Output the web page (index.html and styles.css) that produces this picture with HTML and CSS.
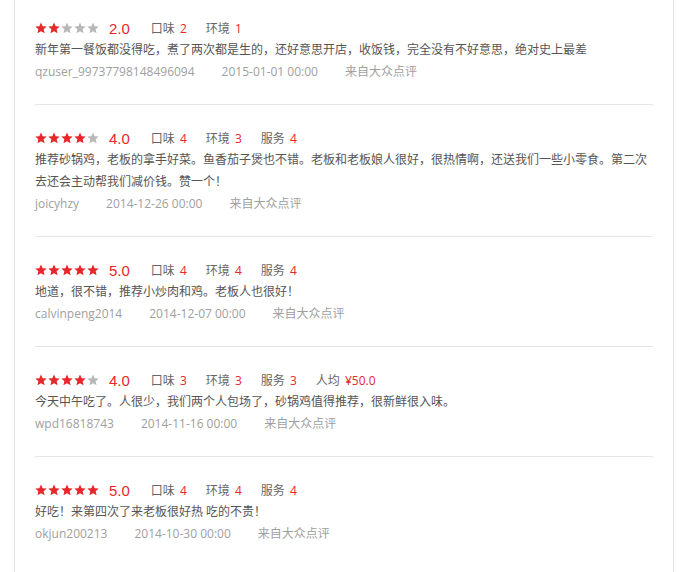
FILE: index.html
```html
<!DOCTYPE html>
<html lang="zh-CN">
<head>
  <meta charset="UTF-8" />
  <title>点评</title>
  <link rel="stylesheet" href="styles.css">
</head>
<body>
  <svg class="defs" width="0" height="0">
    <symbol id="star" viewBox="0 0 12 12">
      <polygon points="6,0.4 7.65,4.2 11.7,4.55 8.65,7.25 9.55,11.3 6,9.15 2.45,11.3 3.35,7.25 0.3,4.55 4.35,4.2" />
    </symbol>
  </svg>

  <div class="reviews">
    <!-- 1 -->
    <div class="review">
      <div class="rate">
        <span class="stars">
          <svg class="on"><use href="#star"/></svg><svg class="on"><use href="#star"/></svg><svg class="off"><use href="#star"/></svg><svg class="off"><use href="#star"/></svg><svg class="off"><use href="#star"/></svg>
        </span>
        <span class="score">2.0</span>
        <span class="sub">口味 <em>2</em></span>
        <span class="sub">环境 <em>1</em></span>
      </div>
      <p class="text">新年第一餐饭都没得吃，煮了两次都是生的，还好意思开店，收饭钱，完全没有不好意思，绝对史上最差</p>
      <div class="meta"><span>qzuser_99737798148496094</span><span>2015-01-01 00:00</span><span>来自大众点评</span></div>
    </div>

    <!-- 2 -->
    <div class="review">
      <div class="rate">
        <span class="stars">
          <svg class="on"><use href="#star"/></svg><svg class="on"><use href="#star"/></svg><svg class="on"><use href="#star"/></svg><svg class="on"><use href="#star"/></svg><svg class="off"><use href="#star"/></svg>
        </span>
        <span class="score">4.0</span>
        <span class="sub">口味 <em>4</em></span>
        <span class="sub">环境 <em>3</em></span>
        <span class="sub">服务 <em>4</em></span>
      </div>
      <p class="text">推荐砂锅鸡，老板的拿手好菜。鱼香茄子煲也不错。老板和老板娘人很好，很热情啊，还送我们一些小零食。第二次去还会主动帮我们减价钱。赞一个！</p>
      <div class="meta"><span>joicyhzy</span><span>2014-12-26 00:00</span><span>来自大众点评</span></div>
    </div>

    <!-- 3 -->
    <div class="review">
      <div class="rate">
        <span class="stars">
          <svg class="on"><use href="#star"/></svg><svg class="on"><use href="#star"/></svg><svg class="on"><use href="#star"/></svg><svg class="on"><use href="#star"/></svg><svg class="on"><use href="#star"/></svg>
        </span>
        <span class="score">5.0</span>
        <span class="sub">口味 <em>4</em></span>
        <span class="sub">环境 <em>4</em></span>
        <span class="sub">服务 <em>4</em></span>
      </div>
      <p class="text">地道，很不错，推荐小炒肉和鸡。老板人也很好！</p>
      <div class="meta"><span>calvinpeng2014</span><span>2014-12-07 00:00</span><span>来自大众点评</span></div>
    </div>

    <!-- 4 -->
    <div class="review">
      <div class="rate">
        <span class="stars">
          <svg class="on"><use href="#star"/></svg><svg class="on"><use href="#star"/></svg><svg class="on"><use href="#star"/></svg><svg class="on"><use href="#star"/></svg><svg class="off"><use href="#star"/></svg>
        </span>
        <span class="score">4.0</span>
        <span class="sub">口味 <em>3</em></span>
        <span class="sub">环境 <em>3</em></span>
        <span class="sub">服务 <em>3</em></span>
        <span class="sub">人均 <em>¥50.0</em></span>
      </div>
      <p class="text">今天中午吃了。人很少，我们两个人包场了，砂锅鸡值得推荐，很新鲜很入味。</p>
      <div class="meta"><span>wpd16818743</span><span>2014-11-16 00:00</span><span>来自大众点评</span></div>
    </div>

    <!-- 5 -->
    <div class="review">
      <div class="rate">
        <span class="stars">
          <svg class="on"><use href="#star"/></svg><svg class="on"><use href="#star"/></svg><svg class="on"><use href="#star"/></svg><svg class="on"><use href="#star"/></svg><svg class="on"><use href="#star"/></svg>
        </span>
        <span class="score">5.0</span>
        <span class="sub">口味 <em>4</em></span>
        <span class="sub">环境 <em>4</em></span>
        <span class="sub">服务 <em>4</em></span>
      </div>
      <p class="text">好吃！来第四次了来老板很好热 吃的不贵！</p>
      <div class="meta"><span>okjun200213</span><span>2014-10-30 00:00</span><span>来自大众点评</span></div>
    </div>
  </div>
</body>
</html>
```

FILE: styles.css
```css
body {
  margin: 0 0 0 14px;
  background: #fff;
  font-family: "Open Sans", "Noto Sans CJK SC", sans-serif;
  font-size: 12px;
  color: #555;
}

.defs {
  position: absolute;
}

.reviews {
  width: 660px;
  min-height: 572px;
  box-sizing: border-box;
  border-left: 1px solid #e6e6e6;
  border-right: 1px solid #e6e6e6;
  padding: 0 20px;
}

.review {
  padding: 22px 0 21px;
  border-bottom: 1px solid #e6e6e6;
}

.review:first-child {
  padding-top: 17px;
}

.review:last-child {
  border-bottom: none;
}

.rate {
  display: flex;
  align-items: center;
  height: 22px;
  color: #666;
}

.stars {
  display: flex;
  gap: 1px;
  margin-right: 10px;
}

.stars svg {
  width: 12px;
  height: 12px;
}

.stars .on {
  fill: #e8262b;
}

.stars .off {
  fill: #b8b8b8;
}

.score {
  font-family: "Liberation Sans", sans-serif;
  font-size: 15px;
  color: #e8262b;
}

.sub {
  margin-left: 21px;
}

.sub + .sub {
  margin-left: 19px;
}

.sub em {
  font-style: normal;
  color: #e8262b;
  margin-left: 2px;
}

.text {
  margin: 0;
  line-height: 22px;
  color: #555;
}

.meta {
  line-height: 22px;
  color: #a0a0a0;
}

.meta span {
  margin-right: 27px;
}
```
